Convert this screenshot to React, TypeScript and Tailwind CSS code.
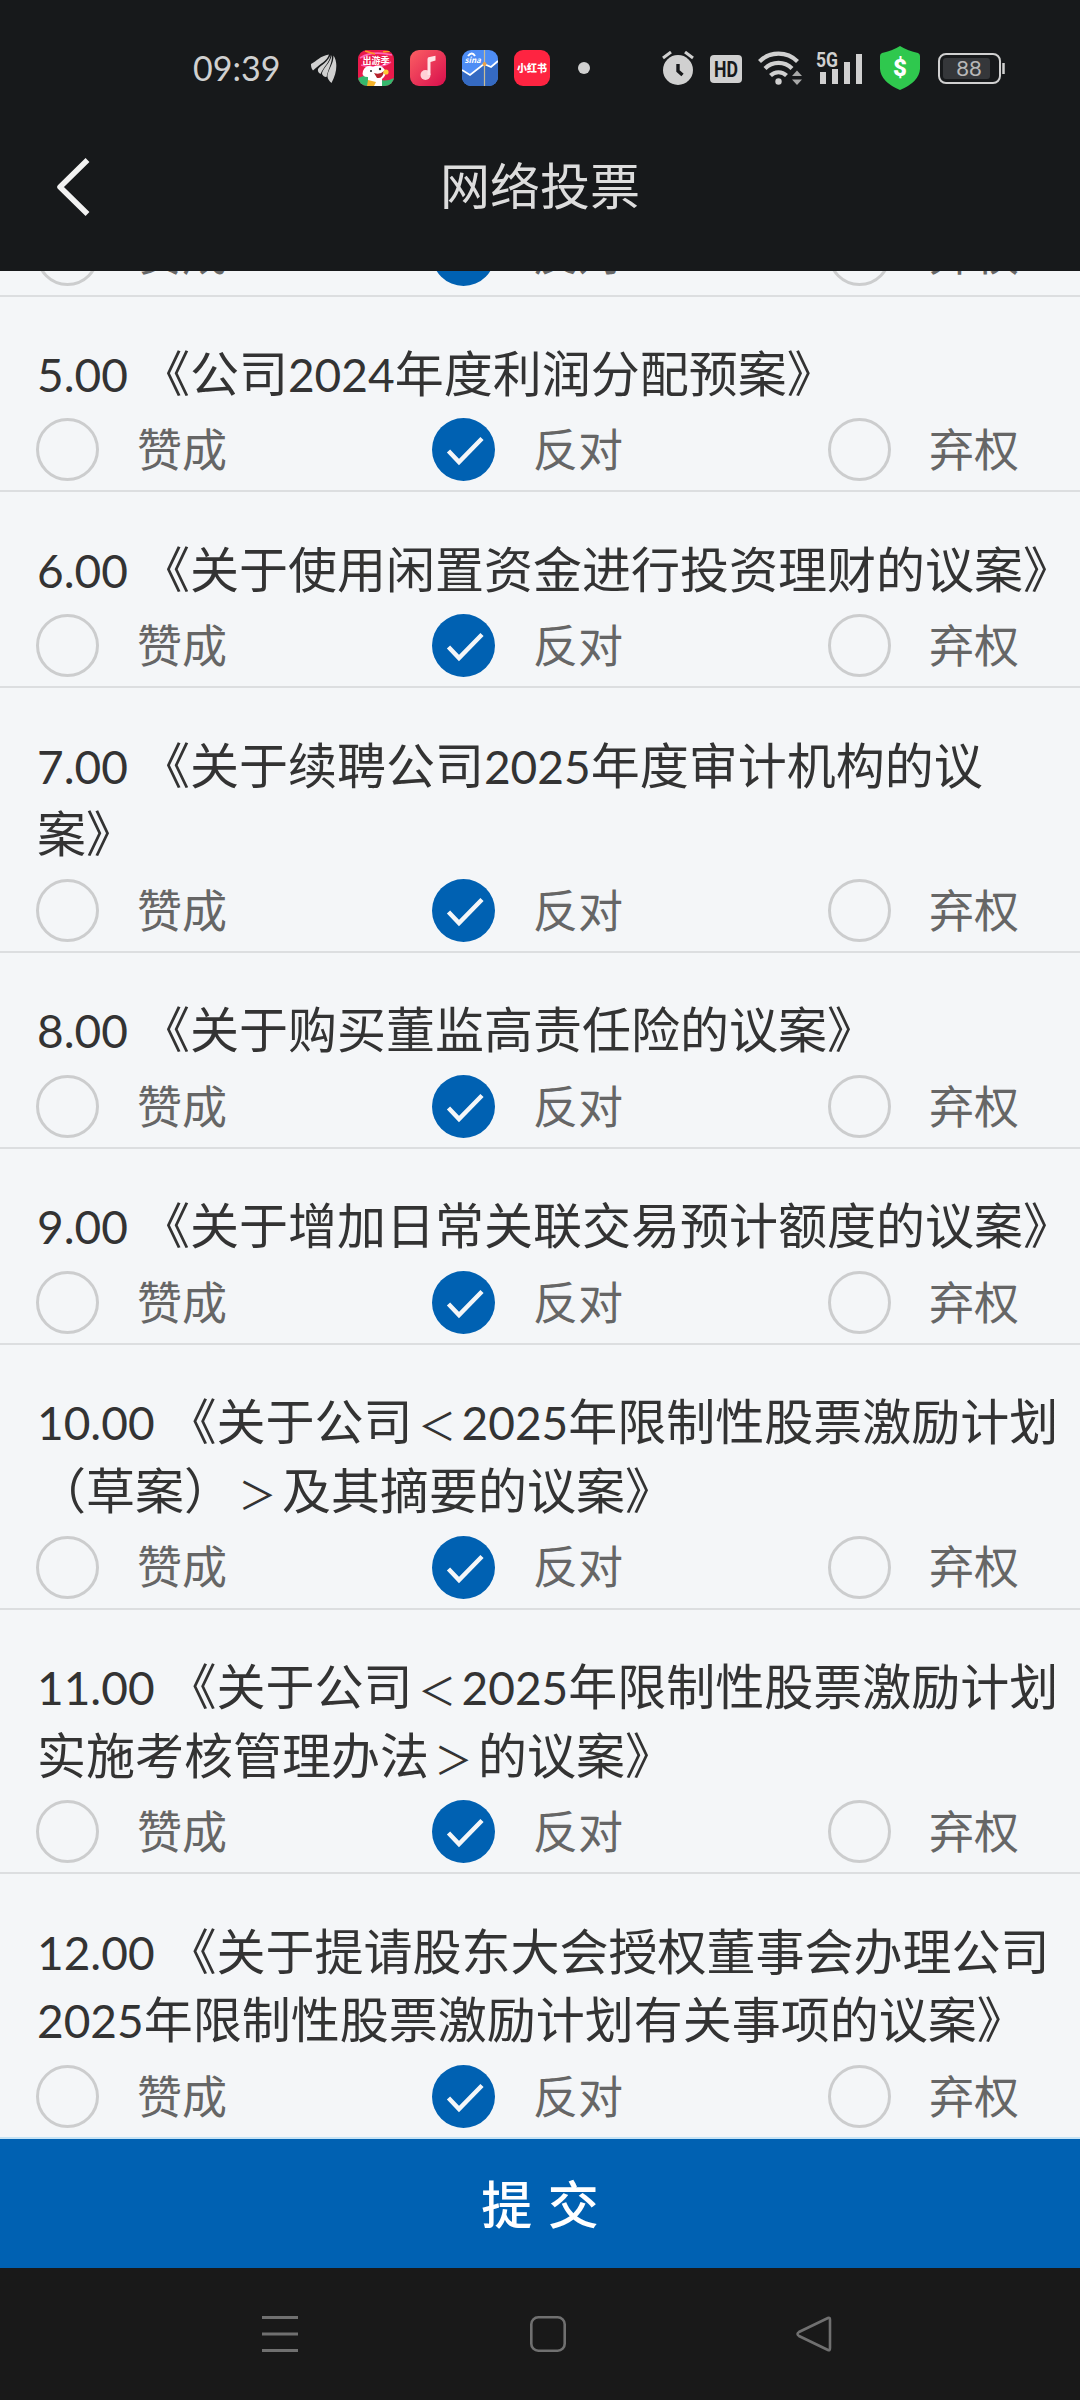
import type { ReactNode } from "react";

type Choice = "赞成" | "反对" | "弃权";

type Proposal = {
  id: string;
  lines: string[];
  vote: Choice;
};

const choices: Choice[] = ["赞成", "反对", "弃权"];

const proposals: Proposal[] = [
  { id: "5", lines: ["5.00 《公司2024年度利润分配预案》"], vote: "反对" },
  { id: "6", lines: ["6.00 《关于使用闲置资金进行投资理财的议案》"], vote: "反对" },
  { id: "7", lines: ["7.00 《关于续聘公司2025年度审计机构的议", "案》"], vote: "反对" },
  { id: "8", lines: ["8.00 《关于购买董监高责任险的议案》"], vote: "反对" },
  { id: "9", lines: ["9.00 《关于增加日常关联交易预计额度的议案》"], vote: "反对" },
  {
    id: "10",
    lines: ["10.00 《关于公司＜2025年限制性股票激励计划", "（草案）＞及其摘要的议案》"],
    vote: "反对",
  },
  {
    id: "11",
    lines: ["11.00 《关于公司＜2025年限制性股票激励计划", "实施考核管理办法＞的议案》"],
    vote: "反对",
  },
  {
    id: "12",
    lines: ["12.00 《关于提请股东大会授权董事会办理公司", "2025年限制性股票激励计划有关事项的议案》"],
    vote: "反对",
  },
];

function AppTile({ children }: { children: ReactNode }) {
  return (
    <svg className="w-9 h-9 rounded-[9px] shrink-0" viewBox="0 0 36 36">
      {children}
    </svg>
  );
}

function StatusBar() {
  return (
    <div className="h-[136px] flex items-center pl-[193px] pr-[75px] text-[#d0d0d0]">
      <span className="w-[118px] pb-px text-[34px] leading-none font-['Lato',sans-serif]">09:39</span>

      <svg className="w-[26px] h-[30px] shrink-0 mr-[21px]" viewBox="0 0 26 30" fill="#d0d0d0">
        <path d="M0 11C6 8 9 3 18 1.500C16 8 10 10 2 17.500C0 15 0 13 0 11Z" />
        <path d="M19.500 2C19 9 13 13 9.500 21C7.500 20 6.500 18 7 16C10 12 17 9 19.500 2Z" />
        <path d="M21 2C21.500 9 18 14 15.500 24C13.500 24 11 22.500 11 20C13 14 19 10 21 2Z" />
        <path d="M22.500 2.500C27 9 26 20 20.500 30C18 28 16 25 16.500 22C18 15 22.500 11 22.500 2.500Z" />
      </svg>

      <div className="flex gap-4">
        <AppTile>
          <rect width="36" height="36" fill="#e91a4b" />
          <path d="M0 28Q10 23 18 28T36 28V36H0Z" fill="#35b76d" />
          <path d="M2 8Q14 0 34 5M3 15Q20 20 33 12" stroke="#ff65b5" strokeWidth="1.6" fill="none" />
          <path d="M7 1L17 4M25 2L34 1" stroke="#ff9a22" strokeWidth="1.5" />
          <text x="18" y="14" textAnchor="middle" fontSize="9" fontWeight="700" fill="#fff">出游季</text>
          <path d="M5 21Q8 14 15 17Q22 13 27 20Q29 25 24 29V36H10V27Q3 27 5 21Z" fill="#fff" />
          <path d="M16 23Q22 25 26 21Q25 29 19 28Z" fill="#b5222d" />
          <circle cx="13" cy="21" r="1" fill="#222" />
          <circle cx="22" cy="19" r="1.2" fill="#222" />
          <circle cx="28" cy="22" r="2.6" fill="#ffc935" />
          <path d="M10 30L18 32L16 36H9Z" fill="#f6b42b" />
        </AppTile>
        <AppTile>
          <defs>
            <linearGradient id="music" x1="0" y1="0" x2="1" y2="1">
              <stop offset="0" stopColor="#fb5f63" />
              <stop offset="1" stopColor="#d80e4d" />
            </linearGradient>
          </defs>
          <rect width="36" height="36" fill="url(#music)" />
          <circle cx="15.500" cy="25" r="5" fill="#ffd0d6" />
          <path d="M17.500 25V9Q17.500 7 19.500 7L25.500 5.800V10.500L20.500 12V25Z" fill="#ffe3e6" />
        </AppTile>
        <AppTile>
          <rect width="36" height="36" fill="#4e8df5" />
          <path d="M0 20L8 25L22 14L29 17L36 12V36H0Z" fill="#356ac2" />
          <path d="M0 20L8 25L22 14L29 17L36 11" stroke="#fff" strokeWidth="1.8" fill="none" />
          <path d="M22.500 0V36" stroke="#c8bd98" strokeWidth="1.2" />
          <circle cx="22.500" cy="14" r="2" fill="#eba24a" />
          <path d="M6 6Q10 1 13 6" stroke="#fff" strokeWidth="2" fill="none" />
          <text x="2.500" y="13" fontSize="8" fontWeight="700" fontStyle="italic" fill="#fff">sina</text>
        </AppTile>
        <AppTile>
          <rect width="36" height="36" fill="#fe2441" />
          <text x="18" y="22" textAnchor="middle" fontSize="10" fontWeight="900" fill="#fff">小红书</text>
        </AppTile>
      </div>

      <span className="w-3 h-3 rounded-full bg-[#d0d0d0] ml-7" />

      <div className="ml-auto flex items-center">
        <svg className="w-8 h-[34px]" viewBox="0 0 32 34">
          <circle cx="16" cy="19" r="15" fill="#d0d0d0" />
          <path d="M1 7L9 1M31 7L23 1" stroke="#d0d0d0" strokeWidth="3" />
          <path d="M16 13V20L20.500 24" stroke="#17191b" strokeWidth="3.4" fill="none" />
        </svg>
        <svg className="w-8 h-7 ml-4 mt-0.5 overflow-visible" viewBox="0 0 32 28">
          <rect width="32" height="28" rx="4" fill="#d0d0d0" />
          <text x="16" y="22" textAnchor="middle" fontSize="22" fontWeight="700" textLength="24" lengthAdjust="spacingAndGlyphs" fill="#17191b" fontFamily="Roboto, sans-serif">HD</text>
        </svg>
        <svg className="w-[44px] h-[34px] ml-4" viewBox="0 0 44 34" fill="none" stroke="#d0d0d0" strokeWidth="4.200">
          <path d="M1.500 10.500A27 27 0 0 1 39.500 10.500" />
          <path d="M7 17.500A19 19 0 0 1 34 17.500" />
          <path d="M12.500 24.500A11.500 11.500 0 0 1 28.500 24.500" />
          <circle cx="20.500" cy="30.500" r="3.200" fill="#d0d0d0" stroke="none" />
          <path d="M34 25L39 19.500L44 25ZM34 28.500H44L39 34Z" fill="#a8a8a8" stroke="none" />
        </svg>
        <svg className="w-[47px] h-8 ml-3.5 overflow-visible" viewBox="0 0 47 32" fill="#d0d0d0">
          <text x="0" y="15" fontSize="21" fontWeight="700" textLength="22" lengthAdjust="spacingAndGlyphs" fontFamily="Roboto, sans-serif">5G</text>
          <path d="M4 20h6v12H4zM16 17h6v15h-6zM28 10h6v22h-6zM40 2h6v30h-6z" />
        </svg>
        <svg className="w-10 h-11 ml-[17px]" viewBox="0 0 40 44">
          <path d="M20 0Q28 5 38 7Q40 8 40 10V23Q39 36 20 44Q1 36 0 23V10Q0 8 2 7Q12 5 20 0Z" fill="#2fc84e" />
          <text x="20" y="30" textAnchor="middle" fontSize="24" fontWeight="900" fill="#fff" fontFamily="Roboto, sans-serif">$</text>
        </svg>
        <svg className="w-[67px] h-[31px] ml-[18px]" viewBox="0 0 67 31">
          <rect x="1" y="1" width="61" height="29" rx="7" fill="none" stroke="#d0d0d0" strokeWidth="2" />
          <rect x="5" y="5" width="47" height="21" rx="3" fill="#35373a" />
          <path d="M65.500 10v11" stroke="#d0d0d0" strokeWidth="2.500" />
          <text x="31" y="23" textAnchor="middle" fontSize="22" fill="#b8b8b8" fontFamily="Lato, sans-serif">88</text>
        </svg>
      </div>
    </div>
  );
}

function Header() {
  return (
    <header className="h-[271px] shrink-0 bg-[#17191b]">
      <StatusBar />
      <div className="h-[101px] grid grid-cols-[200px_1fr_200px] items-center">
        <button className="pl-[56px]">
          <svg className="w-[35px] h-[60px]" viewBox="0 0 35 60" fill="none">
            <path d="M31.500 3L4 30L31.500 57" stroke="#f2f2f2" strokeWidth="5.500" strokeLinejoin="round" />
          </svg>
        </button>
        <h1 className="pb-[7px] text-center text-[50px] leading-none text-[#dddddd]">网络投票</h1>
      </div>
    </header>
  );
}

function Radio({ checked }: { checked: boolean }) {
  if (!checked) {
    return <span className="w-[63px] h-[63px] rounded-full border-[3px] border-[#cccdce]" />;
  }
  return (
    <svg className="w-[63px] h-[63px]" viewBox="0 0 63 63" fill="none">
      <circle cx="31.500" cy="31.500" r="31.500" fill="#0061b2" />
      <path d="M16.500 33L27 44L50 20.500" stroke="#f4f6f8" strokeWidth="4.500" />
    </svg>
  );
}

function VoteOptions({ vote }: { vote: Choice }) {
  return (
    <div className="flex">
      {choices.map((choice) => (
        <label key={choice} className="w-[396px] shrink-0 h-[63px] flex items-center gap-[38px]">
          <Radio checked={choice === vote} />
          <span className="pb-[5px] text-[45px] leading-none text-[#666666]">{choice}</span>
        </label>
      ))}
    </div>
  );
}

// numbers use a lighter latin face, angle brackets are drawn smaller in a full-width cell
function TitleLine({ text }: { text: string }) {
  return (
    <span className="block h-[68.67px]">
      {text.split(/([\d.]+|[＜＞])/).map((part, i) => {
        if (/^[\d.]+$/.test(part)) {
          return (
            <span key={i} className="text-[46px] leading-none font-['Lato',sans-serif]">
              {part}
            </span>
          );
        }
        if (part === "＜" || part === "＞") {
          return (
            <span key={i} className="inline-block w-[49px] text-center text-[38px] leading-none">
              {part}
            </span>
          );
        }
        return part;
      })}
    </span>
  );
}

export default function App() {
  return (
    <div className="w-[1080px] h-[2400px] flex flex-col overflow-hidden bg-[#f4f6f8] font-['Noto_Sans_CJK_SC',sans-serif] [text-spacing-trim:space-all]">
      <Header />

      {/* the list is scrolled, so item 4 only shows its lower edge */}
      <main className="flex-1 min-h-0 flex flex-col justify-end overflow-hidden">
        <div className="shrink-0 pl-9 pb-[9px] border-b-2 border-[#dcdee0]">
          <VoteOptions vote="反对" />
        </div>
        {proposals.map((p) => (
          <section
            key={p.id}
            className="shrink-0 pl-9 pt-[40.33px] pb-[9px] border-b-2 border-[#dcdee0] last:border-[#c5e3f5]"
          >
            <h2 className="mb-[13px] pl-px text-[49px] leading-[68.67px] whitespace-nowrap [word-spacing:2px] text-[#333333]">
              {p.lines.map((line) => (
                <TitleLine key={line} text={line} />
              ))}
            </h2>
            <VoteOptions vote={p.vote} />
          </section>
        ))}
      </main>

      <button className="h-[129px] shrink-0 bg-[#0061b2] pb-[3px] text-white text-[51px] leading-none font-medium [word-spacing:4px]">
        提 交
      </button>

      <nav className="h-[132px] shrink-0 bg-[#191919] flex items-center pl-[262px]">
        <svg className="w-9 h-9" viewBox="0 0 36 36" stroke="#707070" strokeWidth="3">
          <path d="M0 1.500H36M0 18H36M0 34.500H36" />
        </svg>
        <svg className="w-9 h-9 ml-[232px]" viewBox="0 0 36 36" fill="none" stroke="#707070" strokeWidth="2.600">
          <rect x="1.300" y="1.300" width="33.400" height="33.400" rx="7" />
        </svg>
        <svg className="w-9 h-9 ml-[230px]" viewBox="0 0 36 36" fill="none" stroke="#707070" strokeWidth="2.600">
          <path d="M32 2Q34 1 34 4V32Q34 35 32 34L3 20Q0 18 3 16Z" />
        </svg>
      </nav>
    </div>
  );
}
